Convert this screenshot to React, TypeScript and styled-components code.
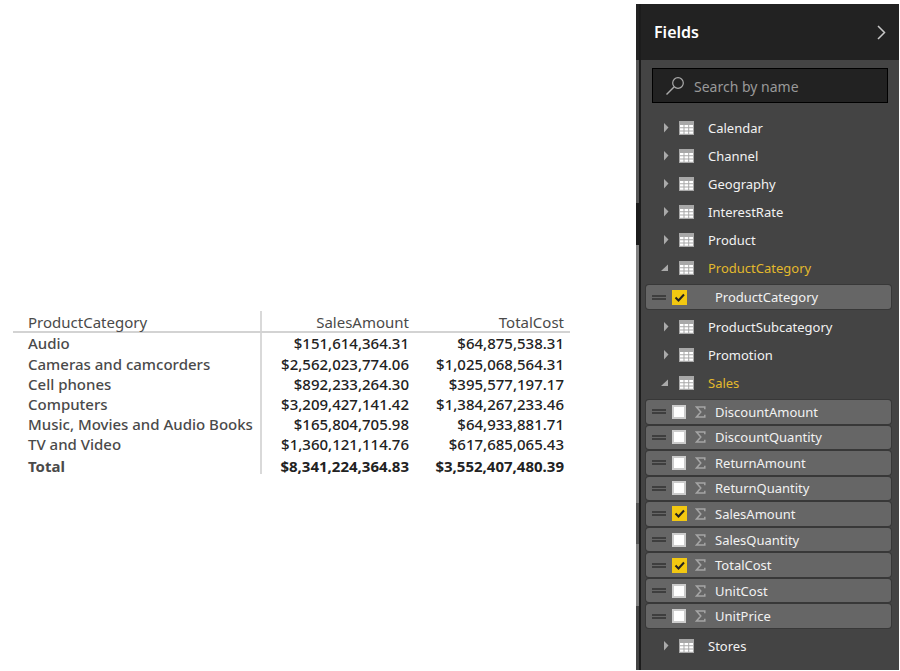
import React from "react";
import styled, { createGlobalStyle } from "styled-components";

const GlobalStyle = createGlobalStyle`
  * { box-sizing: border-box; }
  body { margin: 0; background: #fff; font-family: "Noto Sans", "Open Sans", sans-serif; }
`;

const Page = styled.div`
  display: flex;
  align-items: flex-start;
  min-height: 100vh;
  padding: 4px 1px 1px 0;
`;

const Canvas = styled.main`
  flex: 1;
  padding: 307px 66px 0 13px;
`;

const DataTable = styled.table`
  width: 100%;
  border-collapse: collapse;
  table-layout: fixed;
  font-size: 15px;
  line-height: 20px;
  color: #4a4a4a;
`;

const LabelCol = styled.col`width: 248px;`;
const TotalCol = styled.col`width: 155px;`;

const BodyRow = styled.tr<{ $total?: boolean }>`
  font-weight: ${(p) => (p.$total ? 700 : 500)};
  line-height: ${(p) => (p.$total ? 16 : 20)}px;
  && > * { padding-top: ${(p) => (p.$total ? 4 : 0)}px; }
  &&:first-child > * { padding-bottom: 1px; }
`;

const Cell = styled.td`
  padding: 0 6px 0 0;
  text-align: right;
  color: #222;
  font-weight: inherit;
  white-space: nowrap;
`;

const LabelCell = styled.th`
  padding: 0 0 0 15px;
  text-align: left;
  font-weight: inherit;
  border-right: 2px solid #d9d9d9;
  white-space: nowrap;
`;

const HeadCell = styled.th<{ $first?: boolean }>`
  height: 21px;
  padding: ${(p) => (p.$first ? "2px 0 0 15px" : "2px 6px 0 0")};
  line-height: 18px;
  text-align: ${(p) => (p.$first ? "left" : "right")};
  font-weight: 400;
  border-bottom: 2px solid #d3d3d3;
  border-right: ${(p) => (p.$first ? "2px solid #d9d9d9" : "0")};
`;

const Pane = styled.aside`
  display: flex;
  align-self: stretch;
  flex: 0 0 263px;
  min-width: 0;
  background: #444;
`;

const Scroll = styled.div`
  display: flex;
  flex-direction: column;
  flex: 0 0 5px;
  border-right: 2px solid #1c1c1c;
  background: #2a2a2a;
`;

const ScrollPart = styled.div<{ $size: number; $color: string }>`
  flex: ${(p) => p.$size} 0 0;
  background: ${(p) => p.$color};
`;

const PaneBody = styled.div`
  flex: 1;
  min-width: 0;
`;

const PaneHeader = styled.header`
  display: flex;
  align-items: center;
  justify-content: space-between;
  height: 56px;
  padding: 0 13px;
  background: #222;
`;

const Title = styled.h2`
  margin: 0;
  color: #fff;
  font-size: 16px;
  line-height: 20px;
  font-weight: 600;
`;

const IconButton = styled.button`
  display: flex;
  padding: 0;
  border: 0;
  background: none;
  color: #c8c8c8;
`;

const SearchBox = styled.label`
  display: flex;
  align-items: center;
  gap: 9px;
  height: 35px;
  margin: 8px 11px 11px;
  padding: 0 12px;
  border: 1px solid #000;
  background: #222;
`;

const SearchInput = styled.input`
  flex: 1;
  width: 0;
  min-width: 0;
  padding: 2px 0 0;
  border: 0;
  outline: 0;
  background: none;
  color: #eee;
  font: 14px/20px "Noto Sans", sans-serif;
  &::placeholder { color: #999; opacity: 1; }
`;

const TableRow = styled.button<{ $active?: boolean }>`
  display: grid;
  grid-template-columns: 18px 29px 1fr;
  align-items: center;
  width: 100%;
  height: 28px;
  padding: 0 0 0 20px;
  border: 0;
  background: none;
  color: ${(p) => (p.$active ? "#e3b92c" : "#f2f2f2")};
  font: 13px/20px "Noto Sans", sans-serif;
  text-align: left;
`;

const FieldList = styled.ul<{ $height: number }>`
  display: grid;
  grid-auto-rows: 1fr;
  min-height: ${(p) => p.$height}px;
  margin: 2px 8px 3px 5px;
  padding: 0;
  list-style: none;
`;

const FieldItem = styled.li`
  display: flex;
  padding: 1px 0;
`;

const FieldLabel = styled.label`
  display: grid;
  grid-template-columns: 20px 23px 20px 1fr;
  align-items: center;
  flex: 1;
  padding-left: 6px;
  border-radius: 3px;
  background: #666;
  box-shadow: 0 0 0 1px #383838;
  color: #f2f2f2;
  font-size: 13px;
  line-height: 20px;
`;

const Grip = styled.span`
  width: 14px;
  height: 5px;
  border: solid #3e3e3e;
  border-width: 2px 0;
`;

const Check = styled.input`
  appearance: none;
  width: 14px;
  height: 14px;
  margin: 0;
  border: 2px solid #ccc;
  background: #fff;
  &:checked {
    width: 15px;
    height: 15px;
    border: 0;
    background: #f2c811 url("data:image/svg+xml,%3Csvg xmlns='http://www.w3.org/2000/svg' viewBox='0 0 15 15'%3E%3Cpath d='M3.5 7.5l3 3 5.500-6' fill='none' stroke='%23222' stroke-width='2'/%3E%3C/svg%3E");
  }
`;

const Caret = ({ open }: { open?: boolean }) => (
  <svg width="10" height="10" viewBox="0 0 10 10" aria-hidden="true">
    <path d={open ? "M7 1.500V8H0z" : "M3 0L7.500 4.500 3 9.500z"} fill="#aaa" />
  </svg>
);

const TableIcon = () => (
  <svg width="15" height="14" viewBox="0 0 15 14" aria-hidden="true">
    <path d="M0 0h15v14H0z" fill="#a8a8a8" />
    <path d="M1 4h3.500v2.300H1zM5.500 4h3.700v2.300H5.500zM10.200 4H14v2.300h-3.800zM1 7.200h3.500v2.300H1zM5.500 7.200h3.700v2.300H5.500zM10.200 7.200H14v2.300h-3.800zM1 10.500h3.500v2.300H1zM5.500 10.500h3.700v2.300H5.500zM10.200 10.500H14v2.300h-3.800z" fill="#fff" />
  </svg>
);

const Sigma = () => (
  <svg width="11" height="12" viewBox="0 0 11 12" aria-hidden="true">
    <path d="M9.800 3.300V1H1.500l4.300 5-4.300 5h8.300V8.700" fill="none" stroke="#a5a5a5" strokeWidth="1.500" />
  </svg>
);

type Field = { name: string; checked?: boolean; sum?: boolean };
type Entry = { name: string; fields?: Field[]; height?: number };

const entries: Entry[] = [
  { name: "Calendar" },
  { name: "Channel" },
  { name: "Geography" },
  { name: "InterestRate" },
  { name: "Product" },
  { name: "ProductCategory", height: 26, fields: [{ name: "ProductCategory", checked: true }] },
  { name: "ProductSubcategory" },
  { name: "Promotion" },
  {
    name: "Sales",
    height: 230,
    fields: [
      { name: "DiscountAmount", sum: true },
      { name: "DiscountQuantity", sum: true },
      { name: "ReturnAmount", sum: true },
      { name: "ReturnQuantity", sum: true },
      { name: "SalesAmount", sum: true, checked: true },
      { name: "SalesQuantity", sum: true },
      { name: "TotalCost", sum: true, checked: true },
      { name: "UnitCost", sum: true },
      { name: "UnitPrice", sum: true },
    ],
  },
  { name: "Stores" },
];

const rows = [
  ["Audio", "$151,614,364.31", "$64,875,538.31"],
  ["Cameras and camcorders", "$2,562,023,774.06", "$1,025,068,564.31"],
  ["Cell phones", "$892,233,264.30", "$395,577,197.17"],
  ["Computers", "$3,209,427,141.42", "$1,384,267,233.46"],
  ["Music, Movies and Audio Books", "$165,804,705.98", "$64,933,881.71"],
  ["TV and Video", "$1,360,121,114.76", "$617,685,065.43"],
  ["Total", "$8,341,224,364.83", "$3,552,407,480.39"],
];

export default function App() {
  return (
    <Page>
      <GlobalStyle />
      <Canvas>
        <DataTable>
          <colgroup>
            <LabelCol />
            <col />
            <TotalCol />
          </colgroup>
          <thead>
            <tr>
              <HeadCell $first scope="col">ProductCategory</HeadCell>
              <HeadCell scope="col">SalesAmount</HeadCell>
              <HeadCell scope="col">TotalCost</HeadCell>
            </tr>
          </thead>
          <tbody>
            {rows.map(([label, sales, cost]) => (
              <BodyRow key={label} $total={label === "Total"}>
                <LabelCell scope="row">{label}</LabelCell>
                <Cell>{sales}</Cell>
                <Cell>{cost}</Cell>
              </BodyRow>
            ))}
          </tbody>
        </DataTable>
      </Canvas>
      <Pane>
        <Scroll>
          <ScrollPart $size={56} $color="#222" />
          <ScrollPart $size={143} $color="#555" />
          <ScrollPart $size={42} $color="#1c1c1c" />
          <ScrollPart $size={258} $color="#808080" />
          <ScrollPart $size={41} $color="#555" />
          <ScrollPart $size={62} $color="#808080" />
          <ScrollPart $size={64} $color="#444" />
        </Scroll>
        <PaneBody>
          <PaneHeader>
            <Title>Fields</Title>
            <IconButton type="button" aria-label="Collapse">
              <svg width="9" height="15" viewBox="0 0 9 15">
                <path d="M1 1l6.500 6.500L1 14" fill="none" stroke="currentColor" strokeWidth="1.500" />
              </svg>
            </IconButton>
          </PaneHeader>
          <SearchBox>
            <svg width="20" height="20" viewBox="0 0 20 20" aria-hidden="true">
              <circle cx="13" cy="7" r="5.300" fill="none" stroke="#aaa" strokeWidth="1.200" />
              <path d="M9 11l-7.500 7.500" stroke="#aaa" strokeWidth="1.400" />
            </svg>
            <SearchInput type="text" placeholder="Search by name" aria-label="Search by name" />
          </SearchBox>
          {entries.map((entry) => (
            <React.Fragment key={entry.name}>
              <TableRow type="button" $active={!!entry.fields} aria-expanded={!!entry.fields}>
                <Caret open={!!entry.fields} />
                <TableIcon />
                <span>{entry.name}</span>
              </TableRow>
              {entry.fields && (
                <FieldList $height={entry.height ?? 26}>
                  {entry.fields.map((field) => (
                    <FieldItem key={field.name}>
                      <FieldLabel>
                        <Grip />
                        <Check type="checkbox" defaultChecked={field.checked} />
                        {field.sum ? <Sigma /> : <span />}
                        <span>{field.name}</span>
                      </FieldLabel>
                    </FieldItem>
                  ))}
                </FieldList>
              )}
            </React.Fragment>
          ))}
        </PaneBody>
      </Pane>
    </Page>
  );
}
